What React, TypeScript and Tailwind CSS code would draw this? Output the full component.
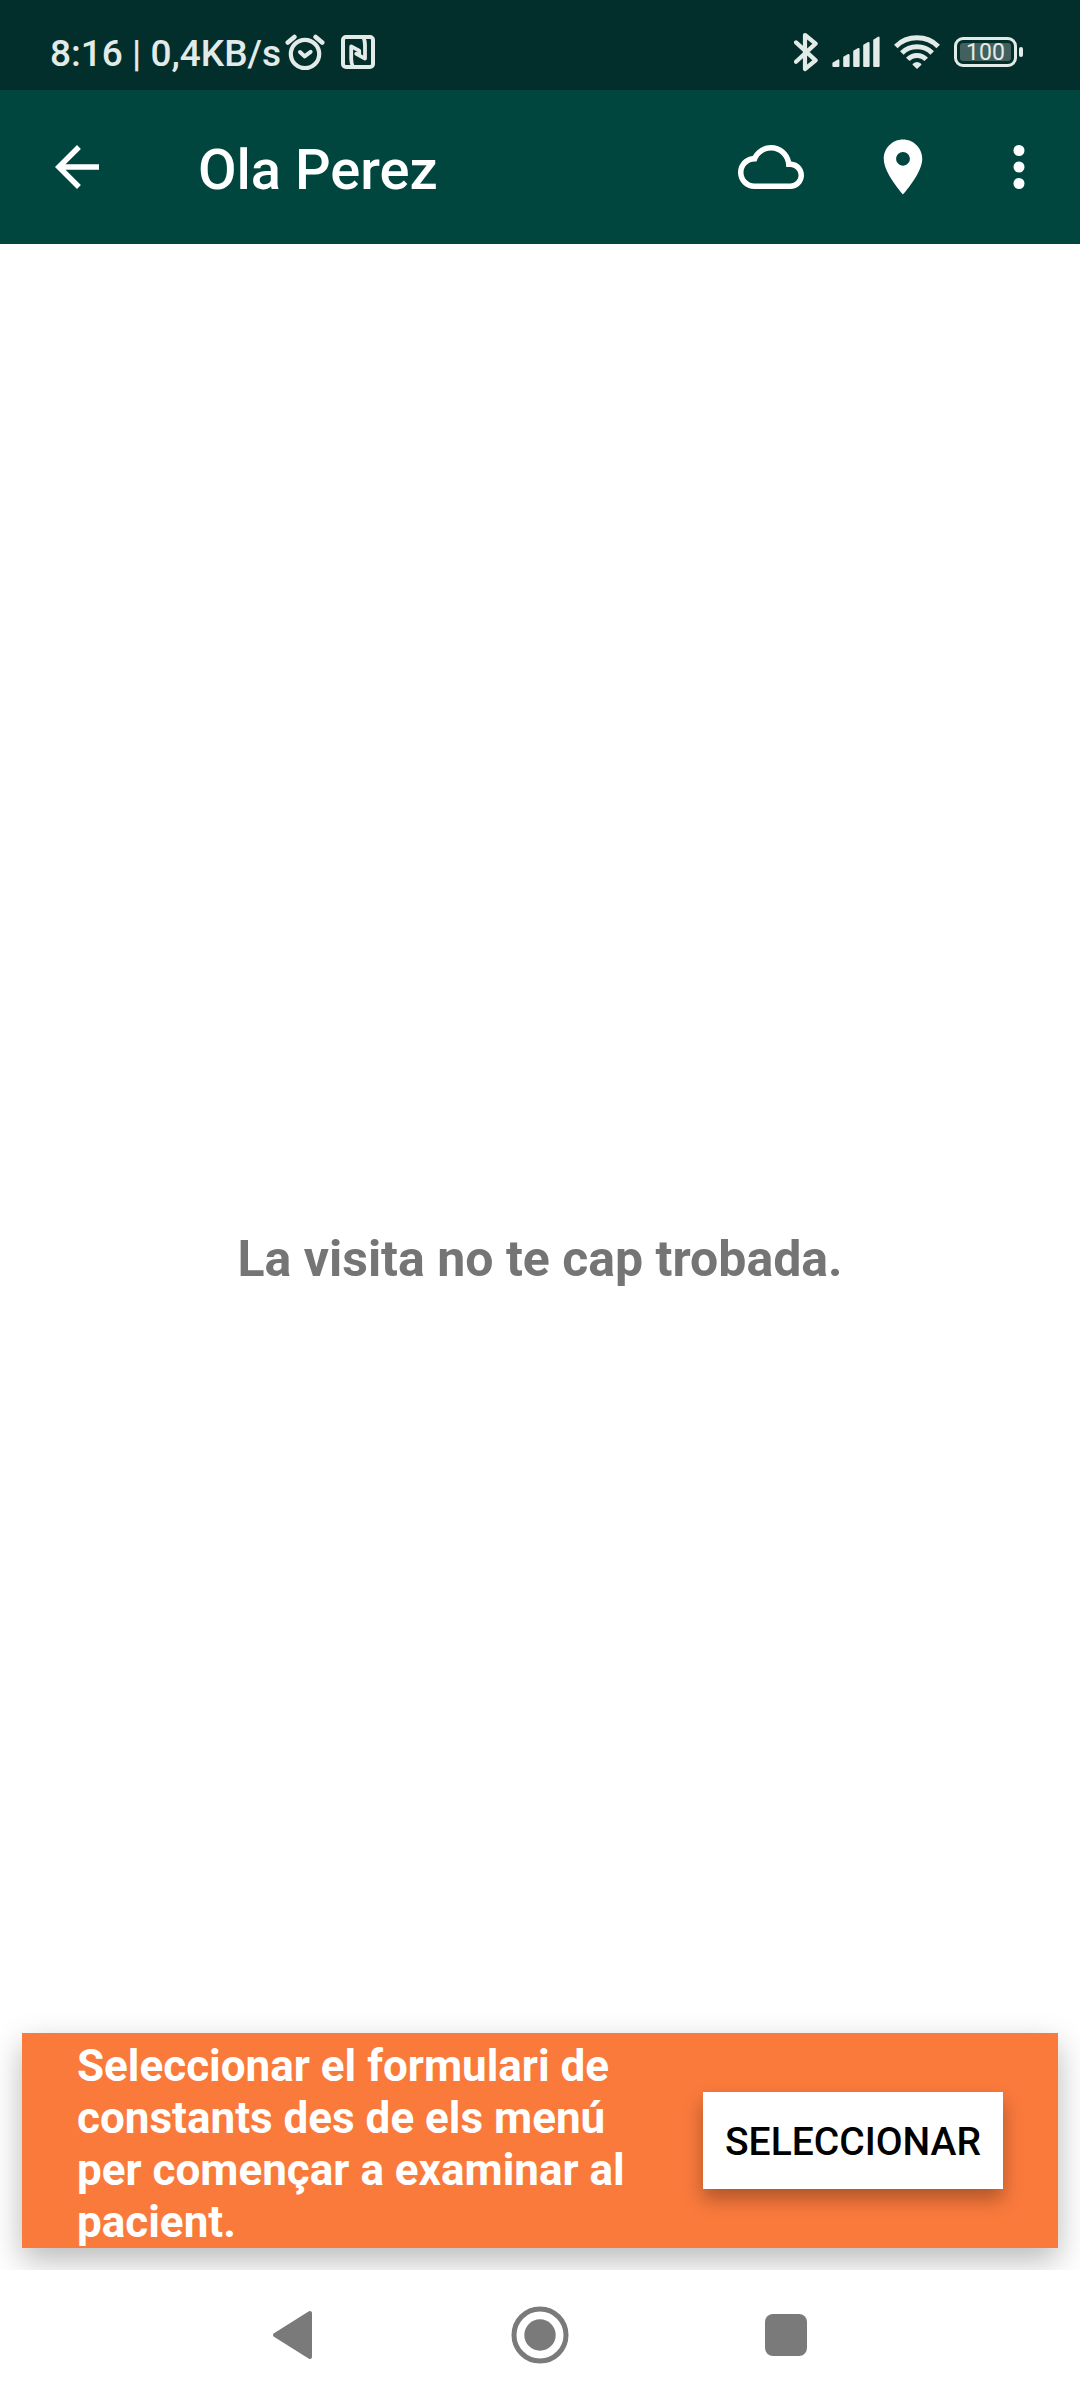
import React from 'react';

function AlarmIcon() {
  return (
    <svg viewBox="0 0 40 36" className="h-[36px] w-[40px]" fill="none" stroke="currentColor" aria-hidden="true">
      <circle cx="20" cy="20" r="14.2" strokeWidth="4.2" />
      <path d="M15 18 L19.6 22.4 L25.6 17.8" strokeWidth="4" strokeLinecap="round" strokeLinejoin="round" />
      <path d="M2.8 8.6 L9.4 3 M37.2 8.6 L30.6 3" strokeWidth="4.6" strokeLinecap="round" />
    </svg>
  );
}

function NfcIcon() {
  return (
    <svg viewBox="0 0 34 34" className="h-[34px] w-[34px]" fill="none" stroke="currentColor" aria-hidden="true">
      <rect x="2" y="2" width="30" height="30" rx="3" strokeWidth="4" />
      <path d="M12 32 Q10.2 28 10.2 24 V11.4 L18.2 15.6 V20" strokeWidth="3.8" strokeLinejoin="round" />
      <path d="M22.4 2 Q24 6 24 10 V23.6 L15.4 18.8" strokeWidth="3.8" strokeLinejoin="round" strokeLinecap="round" />
    </svg>
  );
}

function BluetoothIcon() {
  return (
    <svg viewBox="0 0 24 40" className="h-[40px] w-[24px]" fill="none" stroke="currentColor" aria-hidden="true">
      <path d="M2 10.4 L21.6 28.4 L11 37 V3 L21.6 11.6 L2 29.8" strokeWidth="4.2" strokeLinecap="round" strokeLinejoin="round" />
    </svg>
  );
}

function SignalIcon() {
  return (
    <svg viewBox="0 0 48 32" className="h-[32px] w-[48px]" fill="currentColor" stroke="currentColor" strokeWidth="2" strokeLinejoin="round" aria-hidden="true">
      <path d="M1.4 30 V27.4 L6.4 24.4 V30 Z" />
      <path d="M12.2 30 V21.4 L16.6 19 V30 Z" />
      <path d="M22.2 30 V15.4 L26.6 13 V30 Z" />
      <path d="M32.2 30 V9.4 L36.6 7 V30 Z" />
      <path d="M42.2 30 V4.4 L46.6 1.6 V30 Z" />
    </svg>
  );
}

function WifiIcon() {
  return (
    <svg viewBox="0 0 46 34" className="h-[34px] w-[46px]" fill="none" stroke="currentColor" strokeWidth="5" aria-hidden="true">
      <path d="M1.8 11.4 Q10.4 2.8 23 2.8 Q35.6 2.8 44.2 11.4" />
      <path d="M7.8 18 Q14 11.8 23 11.8 Q32 11.8 38.2 18" />
      <path d="M13.8 24.4 Q17.6 20.4 23 20.4 Q28.4 20.4 32.2 24.4" />
      <path d="M19.4 29.4 Q23 26.4 26.6 29.4 L23 33 Z" fill="currentColor" strokeWidth="1.6" strokeLinejoin="round" />
    </svg>
  );
}

function BackArrowIcon() {
  return (
    <svg viewBox="0 0 24 24" className="size-[66px]" fill="currentColor" aria-hidden="true">
      <path d="M20 11H7.83l5.59-5.59L12 4l-8 8 8 8 1.41-1.41L7.83 13H20v-2z" />
    </svg>
  );
}

function CloudIcon() {
  return (
    <svg viewBox="0 0 24 24" className="size-[66px]" fill="currentColor" aria-hidden="true">
      <path d="M19.35 10.04C18.67 6.59 15.64 4 12 4 9.11 4 6.6 5.64 5.35 8.04 2.34 8.36 0 10.91 0 14c0 3.31 2.69 6 6 6h13c2.76 0 5-2.24 5-5 0-2.64-2.05-4.78-4.65-4.96zM19 18H6c-2.21 0-4-1.79-4-4s1.79-4 4-4h.71C7.37 7.69 9.48 6 12 6c3.04 0 5.5 2.46 5.5 5.5v.5H19c1.66 0 3 1.34 3 3s-1.34 3-3 3z" />
    </svg>
  );
}

function PinIcon() {
  return (
    <svg viewBox="0 0 24 24" className="size-[66px]" fill="currentColor" aria-hidden="true">
      <path d="M12 2C8.13 2 5 5.13 5 9c0 5.25 7 13 7 13s7-7.75 7-13c0-3.87-3.13-7-7-7zm0 9.5c-1.38 0-2.5-1.12-2.5-2.5s1.12-2.5 2.5-2.5 2.5 1.12 2.5 2.5-1.12 2.5-2.5 2.5z" />
    </svg>
  );
}

function MoreIcon() {
  return (
    <svg viewBox="0 0 24 24" className="size-[66px]" fill="currentColor" aria-hidden="true">
      <circle cx="12" cy="6" r="2" />
      <circle cx="12" cy="12" r="2" />
      <circle cx="12" cy="18" r="2" />
    </svg>
  );
}

function Battery() {
  return (
    <div className="flex items-center gap-[2px]" role="img" aria-label="Bateria 100">
      <div className="flex h-[30px] w-[63px] rounded-[9px] border-3 border-current p-[3px]">
        <div className="flex flex-1 items-center justify-center rounded-[3px] bg-[#42615e] text-[23px] leading-none">
          100
        </div>
      </div>
      <div className="h-[10px] w-1 rounded-[2px] bg-current" />
    </div>
  );
}

function StatusBar() {
  return (
    <div className="flex h-[90px] items-center justify-between bg-[#022f2b] pt-[14px] pr-[57px] pl-[50px] text-[#e3ebe9]">
      <div className="flex items-center">
        <span className="pt-1 text-[37px] leading-[44px] font-medium">8:16 | 0,4KB/s</span>
        <div className="ml-1 flex items-center gap-4">
          <AlarmIcon />
          <NfcIcon />
        </div>
      </div>
      <div className="flex items-center gap-[14px]">
        <BluetoothIcon />
        <SignalIcon />
        <WifiIcon />
        <Battery />
      </div>
    </div>
  );
}

function AppBar() {
  return (
    <header className="flex h-[154px] items-center bg-[#00463e] pr-7 pl-11 text-white">
      <button type="button" aria-label="Enrere">
        <BackArrowIcon />
      </button>
      <h1 className="ml-[88px] flex-1 pt-[6px] text-[56px] leading-[64px] font-medium">Ola Perez</h1>
      <div className="flex items-center">
        <button type="button" aria-label="Sincronitzar" className="mr-[66px]">
          <CloudIcon />
        </button>
        <button type="button" aria-label="Ubicació" className="mr-[50px]">
          <PinIcon />
        </button>
        <button type="button" aria-label="Més opcions">
          <MoreIcon />
        </button>
      </div>
    </header>
  );
}

function Banner() {
  return (
    <section className="m-[22px] flex items-center justify-between self-end bg-[#fa7a3c] pr-[55px] pl-[55px] shadow-[0_12px_30px_rgba(0,0,0,0.28)] [grid-area:1/1]">
      <p className="max-w-[580px] pt-[7px] text-[44px] leading-[52px] font-bold text-white">
        Seleccionar el formulari de constants des de els menú per començar a examinar al pacient.
      </p>
      <button
        type="button"
        className="h-[97px] w-[300px] bg-white pt-1 text-[39px] font-medium text-black shadow-[0_10px_18px_rgba(0,0,0,0.3)]"
      >
        SELECCIONAR
      </button>
    </section>
  );
}

function SystemNav() {
  return (
    <nav className="flex h-[130px] items-center justify-center gap-[188px] bg-white text-[#7a7a7a]">
      <button type="button" aria-label="Tornar">
        <svg viewBox="0 0 58 58" className="size-[58px]" fill="currentColor" stroke="currentColor" strokeWidth="4" strokeLinejoin="round" aria-hidden="true">
          <path d="M10 29 L45 7 V51 Z" />
        </svg>
      </button>
      <button type="button" aria-label="Inici">
        <svg viewBox="0 0 58 58" className="size-[58px]" aria-hidden="true">
          <circle cx="29" cy="29" r="26" fill="none" stroke="currentColor" strokeWidth="5" />
          <circle cx="29" cy="29" r="15.7" fill="currentColor" />
        </svg>
      </button>
      <button type="button" aria-label="Recents">
        <svg viewBox="0 0 58 58" className="size-[58px]" fill="currentColor" aria-hidden="true">
          <rect x="8" y="8" width="42" height="42" rx="8" />
        </svg>
      </button>
    </nav>
  );
}

export default function App() {
  return (
    <div className="flex min-h-screen flex-col bg-white font-['Roboto',sans-serif]">
      <StatusBar />
      <AppBar />
      <main className="grid flex-1 overflow-hidden bg-white">
        <p className="self-center pt-1 text-center text-[50px] leading-[58px] font-bold text-[#757575] [grid-area:1/1]">
          La visita no te cap trobada.
        </p>
        <Banner />
      </main>
      <SystemNav />
    </div>
  );
}
